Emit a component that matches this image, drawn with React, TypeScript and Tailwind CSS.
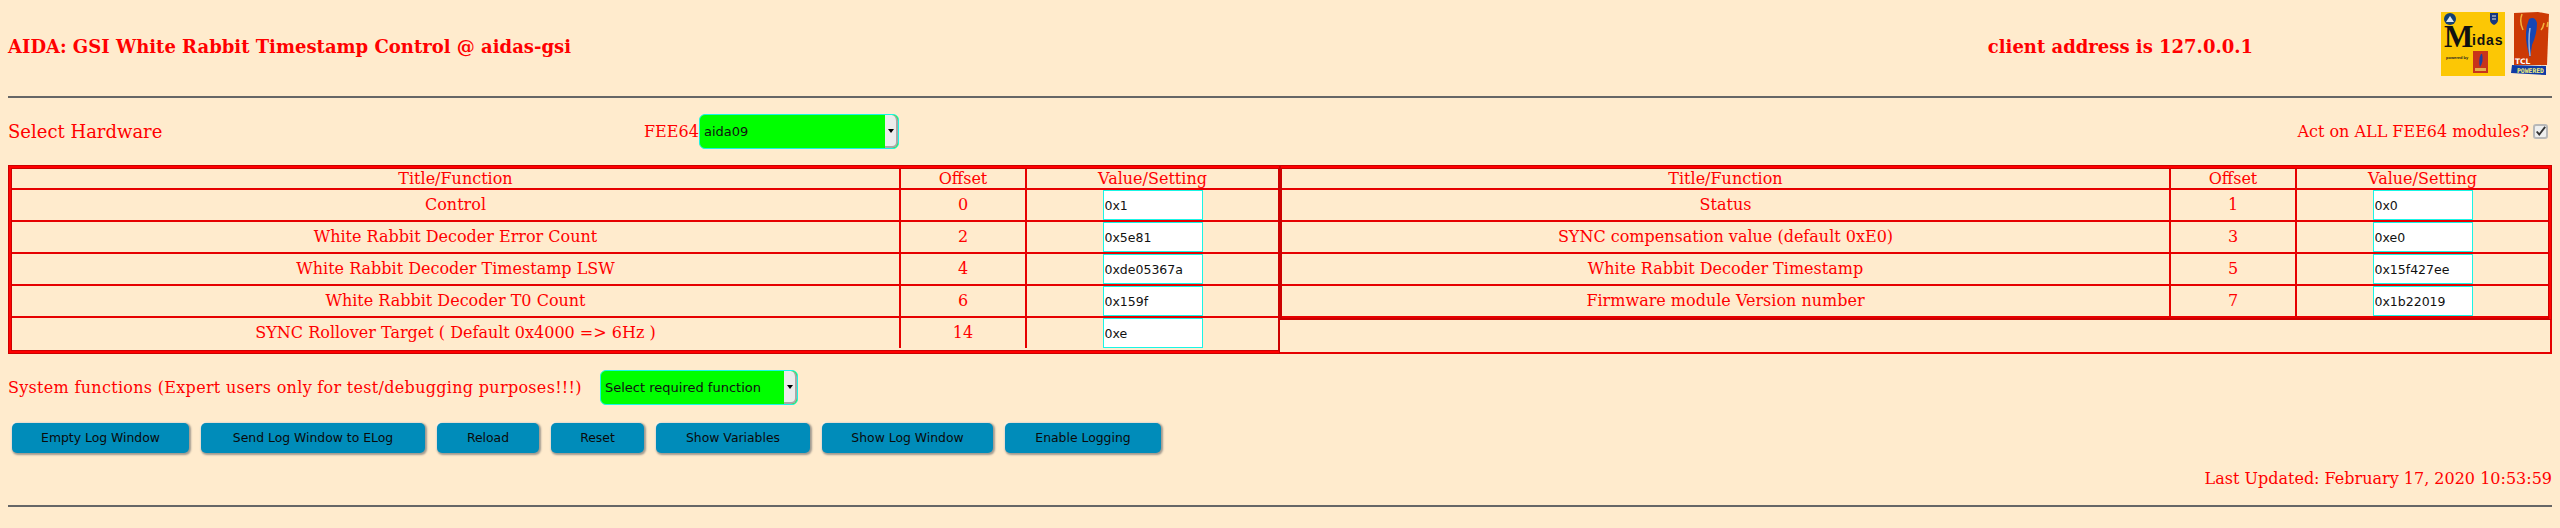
const serif = "font-['DejaVu_Serif',serif]";
const sans = "font-['DejaVu_Sans',sans-serif]";

const leftRows = [
  ['Control', '0', '0x1'],
  ['White Rabbit Decoder Error Count', '2', '0x5e81'],
  ['White Rabbit Decoder Timestamp LSW', '4', '0xde05367a'],
  ['White Rabbit Decoder T0 Count', '6', '0x159f'],
  ['SYNC Rollover Target ( Default 0x4000 => 6Hz )', '14', '0xe'],
];

const rightRows = [
  ['Status', '1', '0x0'],
  ['SYNC compensation value (default 0xE0)', '3', '0xe0'],
  ['White Rabbit Decoder Timestamp', '5', '0x15f427ee'],
  ['Firmware module Version number', '7', '0x1b22019'],
];

const buttons = [
  ['Empty Log Window', 'w-[177px]'],
  ['Send Log Window to ELog', 'w-[224px]'],
  ['Reload', 'w-[102px]'],
  ['Reset', 'w-[93px]'],
  ['Show Variables', 'w-[154px]'],
  ['Show Log Window', 'w-[171px]'],
  ['Enable Logging', 'w-[156px]'],
];

function MidasLogo() {
  return (
    <svg width="64" height="64" viewBox="0 0 64 64" className="block shrink-0">
      <rect width="64" height="64" fill="#fcc705" />
      <circle cx="9" cy="7" r="6" fill="#123f73" />
      <path d="M5 10 L9 4 L13 10 Z" fill="#dfe8ef" />
      <path d="M49 1 H57 V8 Q57 11 53 13 Q49 11 49 8 Z" fill="#16387f" />
      <path d="M51 4 H55 M51 7 H55" stroke="#e6e6e6" strokeWidth="1" />
      <text x="3" y="35" fontFamily="Liberation Serif" fontWeight="700" fontSize="31" fill="#111">M</text>
      <text x="31" y="33" fontFamily="Liberation Sans" fontWeight="700" fontSize="14" letterSpacing="0.8" fill="#111">idas</text>
      <text x="5" y="47" fontFamily="Liberation Sans" fontWeight="700" fontSize="4" fill="#222">powered by</text>
      <rect x="32" y="39" width="15" height="22" fill="#c8341a" />
      <path d="M40 42 Q37 48 39 55 Q43 49 41 42 Z" fill="#1c3fa0" />
      <rect x="34" y="56" width="11" height="3" fill="#e4b04a" />
    </svg>
  );
}

function TclLogo() {
  return (
    <svg width="41" height="64" viewBox="0 0 41 64" className="block shrink-0">
      <path d="M3 1 L27 0 L38 2 L36 53 L3 53 Z" fill="#cc3a05" />
      <path d="M1 53 L35 54 L35 63 L0 61 Z" fill="#0f3aa5" />
      <path d="M18 7 Q24 4 26 11 Q26 22 21 33 L19 46 L16 34 Q13 20 18 7 Z" fill="#1646b5" />
      <path d="M19 16 Q17 28 19 44" stroke="#9db4dd" strokeWidth="1.5" fill="none" />
      <path d="M11 2 Q8 10 12 18 M33 11 Q32 16 30 18 M37 10 L36 15" stroke="#f2b33c" strokeWidth="1.5" fill="none" />
      <text x="4" y="52" fontFamily="DejaVu Sans" fontWeight="700" fontSize="7.5" fill="#fff">TCL</text>
      <text x="6" y="61" fontFamily="DejaVu Sans Mono" fontWeight="700" fontSize="6.4" fill="#f5f17a">POWERED</text>
    </svg>
  );
}

function Dropdown({ label, width }: { label: string; width: string }) {
  return (
    <div className={`relative flex h-[35px] items-center rounded-md border border-[#19f5e6] bg-[#00ff00] pl-1 ${width}`}>
      <span className={`${sans} text-[13px] text-[#111]`}>{label}</span>
      <div className="absolute top-0 right-0 bottom-0 flex w-[13px] items-center justify-center rounded-r-md border-r-2 border-b-2 border-[#a8a8a8] bg-[#ececec]">
        <span className="h-0 w-0 border-x-[3px] border-t-[4px] border-x-transparent border-t-black" />
      </div>
    </div>
  );
}

function HeaderCells() {
  return (
    <div className="grid h-[21px] grid-cols-[889px_126px_1fr] border-b-2 border-[#e60000] leading-[19px]">
      <div className="border-r-2 border-[#e60000] text-center">Title/Function</div>
      <div className="border-r-2 border-[#e60000] text-center">Offset</div>
      <div className="text-center">Value/Setting</div>
    </div>
  );
}

function Row({ row, last }: { row: string[]; last?: boolean }) {
  return (
    <div className={`grid grid-cols-[889px_126px_1fr] items-stretch ${last ? 'h-[30px]' : 'h-[32px] border-b-2 border-[#e60000]'}`}>
      <div className="flex items-center justify-center border-r-2 border-[#e60000]">{row[0]}</div>
      <div className="flex items-center justify-center border-r-2 border-[#e60000]">{row[1]}</div>
      <div className="flex justify-center">
        <input
          readOnly
          defaultValue={row[2]}
          className={`${sans} block h-[30px] w-[100px] border border-[#19f5e6] bg-white pl-[1px] text-[12.5px] text-[#111]`}
        />
      </div>
    </div>
  );
}

export default function App() {
  return (
    <div className={`${serif} min-h-[528px] bg-[#ffebcd] px-2 pt-3 text-[16px] text-[#ff0000]`}>
      <div className="flex h-16 items-center">
        <h1 className="flex-1 pt-[5px] text-[18px] leading-[21px] font-bold">AIDA: GSI White Rabbit Timestamp Control @ aidas-gsi</h1>
        <div className="mr-[188px] pt-[5px] text-[18px] leading-[21px] font-bold">client address is 127.0.0.1</div>
        <div className="flex gap-[6px]">
          <MidasLogo />
          <TclLogo />
        </div>
      </div>
      <hr className="mt-5 h-[2px] border-0 bg-[#666666]" />

      <div className="mt-4 flex h-[35px] items-center">
        <div className="w-[636px] text-[18px]">Select Hardware</div>
        <div className="w-[55px]">FEE64</div>
        <Dropdown label="aida09" width="w-[200px]" />
        <div className="ml-auto flex items-center gap-1 pr-1">
          <span>Act on ALL FEE64 modules?</span>
          <span className="flex h-[15px] w-[15px] items-center justify-center rounded-[3px] border-2 border-[#b8b8b8] bg-[#efefef]">
            <svg width="13" height="13" viewBox="0 0 13 13">
              <path d="M2 6.5 L5 10 L12 1" stroke="#333" strokeWidth="2.2" fill="none" />
            </svg>
          </span>
        </div>
      </div>

      <div className="mt-4 flex">
        <div className="w-[1272px] border-y-[3px] border-r border-l-[3px] border-[#ff0000] shadow-[inset_0_0_0_1px_#cc0000] outline-1 -outline-offset-1 outline-[#cc0000]">
          <div className="p-px">
            <HeaderCells />
            {leftRows.map((row, i) => (
              <Row key={row[1]} row={row} last={i === leftRows.length - 1} />
            ))}
          </div>
        </div>
        <div className="w-[1272px]">
          <div className="border-t-[3px] border-r-[3px] border-b border-l border-[#ff0000] shadow-[inset_0_0_0_1px_#cc0000] outline-1 -outline-offset-1 outline-[#cc0000]">
            <div className="p-px">
              <HeaderCells />
              {rightRows.map((row) => (
                <Row key={row[1]} row={row} />
              ))}
            </div>
          </div>
          <div className="h-[34px] border-r-2 border-b-2 border-[#e60000]" />
        </div>
      </div>

      <div className="mt-4 flex h-[35px] items-center">
        <div className="w-[592px] tracking-[0.3px]">System functions (Expert users only for test/debugging purposes!!!)</div>
        <Dropdown label="Select required function" width="w-[198px]" />
      </div>

      <div className="mt-[18px] flex gap-3 pl-1">
        {buttons.map(([label, width]) => (
          <button
            key={label}
            className={`${sans} h-[30px] rounded-[5px] bg-[#008cba] text-[12.4px] text-[#0a0a0a] shadow-[1px_1px_2px_1px_#a09a90,-1px_-1px_1px_#fff8ec] ${width}`}
          >
            {label}
          </button>
        ))}
      </div>

      <div className="mt-4 text-right leading-[19px]">Last Updated: February 17, 2020 10:53:59</div>
      <hr className="mt-[17px] h-[2px] border-0 bg-[#666666]" />
    </div>
  );
}
